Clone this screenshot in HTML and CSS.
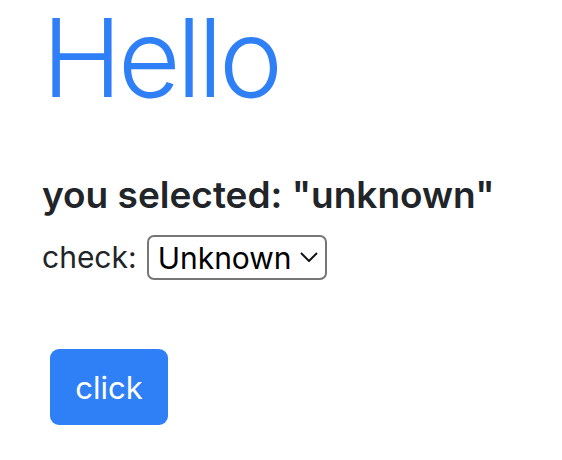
FILE: index.html
```html
<!DOCTYPE html>
<html lang="en">
<head>
<meta charset="utf-8">
<title>Hello</title>
<link rel="stylesheet" href="styles.css">
</head>
<body>
<main class="page">
  <h1 class="title">Hello</h1>
  <h4 class="selected">you selected: "unknown"</h4>
  <div class="check">
    <label for="chk">check:</label>
    <span class="select-wrap">
      <select id="chk" class="select">
        <option>Unknown</option>
        <option>Yes</option>
        <option>No</option>
      </select>
      <svg class="chev" width="18" height="10" viewBox="0 0 18 10"><path d="M1 1 L9 9 L17 1" fill="none" stroke="#111" stroke-width="2"/></svg>
    </span>
  </div>
  <button class="btn">click</button>
</main>
</body>
</html>
```

FILE: styles.css
```css
html, body {
  margin: 0;
  padding: 0;
  background: #fff;
}
body {
  font-family: Inter, "Liberation Sans", sans-serif;
  color: #212529;
}
.page {
  padding: 0 0 0 42px;
}
.title {
  margin: 0;
  font-size: 108px;
  font-weight: 300;
  line-height: 1.08;
  color: #2f7ff6;
  letter-spacing: -4px;
}
.selected {
  margin: 56px 0 0 0;
  font-size: 37px;
  font-weight: 600;
  line-height: 1.2;
  color: #212529;
}
.check {
  display: flex;
  align-items: center;
  gap: 10px;
  margin-top: 18px;
  font-size: 30px;
  line-height: 1.5;
}
.select-wrap {
  position: relative;
  display: inline-flex;
}
.select {
  appearance: none;
  -webkit-appearance: none;
  font-family: Inter, "Liberation Sans", sans-serif;
  font-size: 30px;
  color: #000;
  background: #fff;
  border: 2px solid #767676;
  border-radius: 7px;
  width: 180px;
  height: 45px;
  padding: 0 32px 0 9px;
}
.chev {
  position: absolute;
  right: 9px;
  top: 17px;
  pointer-events: none;
}
.btn {
  display: block;
  margin: 69px 0 0 8px;
  width: 118px;
  height: 76px;
  border: 0;
  border-radius: 9px;
  background: #2f7ff6;
  color: #fff;
  font-family: Inter, "Liberation Sans", sans-serif;
  font-size: 31px;
  font-weight: 400;
}
```
